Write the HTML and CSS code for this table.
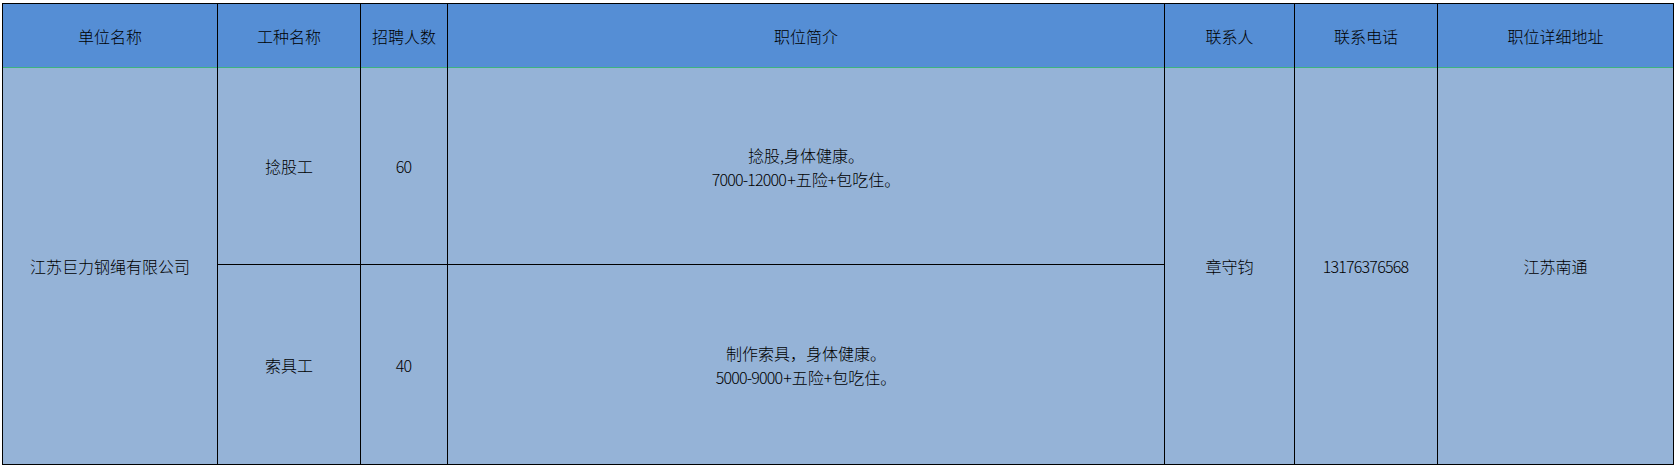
FILE: index.html
```html
<!DOCTYPE html>
<html lang="zh-CN">
<head>
<meta charset="utf-8">
<title>招聘信息</title>
<link rel="stylesheet" href="styles.css">
</head>
<body>
<div class="sheet">
  <div class="cell head">单位名称</div>
  <div class="cell head">工种名称</div>
  <div class="cell head">招聘人数</div>
  <div class="cell head">职位简介</div>
  <div class="cell head">联系人</div>
  <div class="cell head">联系电话</div>
  <div class="cell head">职位详细地址</div>

  <div class="cell span2">江苏巨力钢绳有限公司</div>
  <div class="cell">捻股工</div>
  <div class="cell"><span class="num">60</span></div>
  <div class="cell"><p class="lines">捻股,身体健康。<br><span class="num">7000-12000</span>+五险+包吃住。</p></div>
  <div class="cell span2">章守钧</div>
  <div class="cell span2"><span class="num">13176376568</span></div>
  <div class="cell span2">江苏南通</div>

  <div class="cell">索具工</div>
  <div class="cell"><span class="num">40</span></div>
  <div class="cell"><p class="lines">制作索具，身体健康。<br><span class="num">5000-9000</span>+五险+包吃住。</p></div>
</div>
</body>
</html>
```

FILE: styles.css
```css
html, body {
  margin: 0;
  padding: 0;
  background: #ffffff;
}

body {
  font-family: "Noto Sans CJK SC", "Noto Sans", sans-serif;
  font-size: 16px;
  font-weight: 300;
  color: #000000;
}

.sheet {
  display: grid;
  grid-template-columns: 214px 142px 86px 716px 129px 142px 235px;
  grid-template-rows: 63px 196px 199px;
  gap: 1px;
  padding: 1px;
  margin: 3px 0 0 2px;
  width: max-content;
  background: #000000;
}

.cell {
  display: flex;
  align-items: center;
  justify-content: center;
  text-align: center;
  background: #95b3d7;
  line-height: 20px;
}

.lines {
  margin: 0;
  padding-top: 1px;
  line-height: 24px;
}

.head {
  background: #558ed5;
  box-shadow: 0 1px 0 #3fb27f;
}

.span2 {
  grid-row: span 2;
}

.num {
  letter-spacing: -0.8px;
  margin-right: 1px;
}
```
